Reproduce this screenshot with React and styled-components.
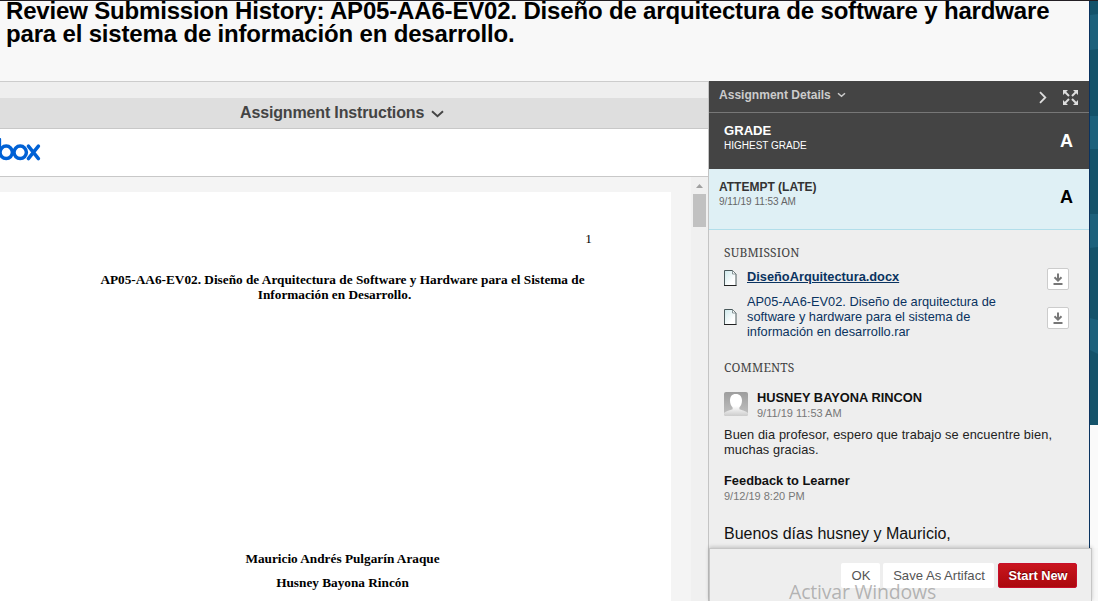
import React from "react";
import styled, { createGlobalStyle, css } from "styled-components";

const Global = createGlobalStyle`
  * { box-sizing: border-box; }
  body { margin: 0; background: #f8f8f8; font-family: "Liberation Sans", Arial, sans-serif; overflow: hidden; }
`;

const Screen = styled.div`
  position: relative;
  display: flex;
  width: 1098px;
  height: 601px;
  overflow: hidden;
  border-top: 1px solid #231f24;
`;
const Page = styled.div`
  width: 1089px;
  display: flex;
  flex-direction: column;
  background: #f8f8f8;
`;
const Backdrop = styled.div`
  width: 9px;
  border-left: 1px solid #0a3360;
  height: 547px;
  background: #fafafa;
  svg { display: block; }
`;
const Title = styled.h1`
  margin: 0;
  height: 80px;
  padding-left: 6px;
  font-size: 24px;
  line-height: 23px;
  letter-spacing: -0.17px;
  color: #000;
  white-space: nowrap;
  span { display: block; position: relative; top: -2px; }
`;
const Columns = styled.div`
  display: flex;
  flex: 1;
  min-height: 0;
`;
const Viewer = styled.main`
  width: 709px;
  border-right: 1px solid #c4c4c4;
  display: flex;
  flex-direction: column;
`;
const Spacer = styled.div`
  height: 17px;
  border-top: 1px solid #ccc;
  background: #eee;
`;
const Instructions = styled.div`
  height: 31px;
  display: flex;
  align-items: center;
  padding: 0 0 1px 240px;
  gap: 7px;
  background: #dedede;
  border-bottom: 1px solid #c8c8c8;
  color: #444;
  font-size: 16px;
  font-weight: bold;
  letter-spacing: -0.15px;
  svg { margin-top: 2px; }
`;
const BoxBar = styled.div`
  height: 48px;
  background: #fff;
  border-bottom: 1px solid #c8c8c8;
  svg { display: block; margin-top: 9px; }
`;
const Document = styled.div`
  flex: 1;
  min-height: 0;
  display: flex;
  background: #f4f4f4;
`;
const Paper = styled.article`
  width: 671px;
  margin: 15px 20px 0 0;
  padding: 39px 0 0 14px;
  background: #fff;
  color: #000;
  font-family: "Liberation Serif", "Times New Roman", serif;
  font-size: 13.27px;
  line-height: 15px;
  text-align: center;
`;
const PageNumber = styled.div`
  padding-right: 79px;
  text-align: right;
`;
const PaperTitle = styled.div`
  margin-top: 26px;
  font-weight: bold;
`;
const PaperTitleEnd = styled.div`
  padding-right: 16px;
`;
const Authors = styled.div`
  margin-top: 245px;
  line-height: 24px;
  font-weight: bold;
`;
const Scrollbar = styled.div`
  width: 17px;
  background: #f0f0f0;
  padding: 7px 0 0 2px;
  svg { display: block; margin-left: 3px; }
`;
const Thumb = styled.div`
  width: 13px;
  height: 33px;
  margin-top: 6px;
  background: #c1c1c1;
`;
const Details = styled.aside`
  width: 380px;
  background: #eee;
`;
const DetailsBar = styled.header`
  height: 32px;
  display: flex;
  align-items: center;
  padding-left: 10px;
  background: #444;
  border-bottom: 1px solid #777;
  color: #ccc;
`;
const DetailsTitle = styled.div`
  display: flex;
  align-items: center;
  gap: 6px;
  flex: 1;
  height: 15px;
  margin-bottom: 4px;
  font-size: 12.05px;
  font-weight: bold;
`;
const BarIcons = styled.div`
  display: flex;
  align-items: center;
  gap: 16px;
  margin: 2px 10px 0 0;
`;
const Band = styled.section`
  display: flex;
  justify-content: space-between;
  ${(p) => p.$attempt
    ? css`height: 61px; padding: 10px 16px 0 10px; background: #dff0f5; border-bottom: 1px solid #b2deea; color: #333;`
    : css`height: 56px; padding: 9px 16px 0 15px; background: #444; color: #fff;`}
`;
const BandTitle = styled.div`
  font-size: ${(p) => p.$size}px;
  line-height: ${(p) => p.$line}px;
  font-weight: bold;
`;
const BandNote = styled.div`
  font-size: 10px;
  line-height: 14px;
  color: ${(p) => p.$color};
`;
const Mark = styled.div`
  width: 13px;
  font-size: 18px;
  line-height: 20px;
  font-weight: bold;
  color: ${(p) => p.$color};
  padding-top: ${(p) => p.$drop}px;
`;
const Content = styled.div`
  padding: 15px 20px 0 15px;
`;
const Heading = styled.h2`
  margin: ${(p) => p.$gap || 0}px 0 0;
  height: 16px;
  font: 12px/16px "Noto Serif", "Liberation Serif", Georgia, serif;
  letter-spacing: 0.15px;
  color: #444;
`;
const FileRow = styled.div`
  display: flex;
  align-items: center;
  height: ${(p) => p.$height}px;
  > svg { margin-right: 10px; flex: none; }
`;
const FileName = styled.a`
  flex: 1;
  padding-bottom: 2px;
  font-size: 12.8px;
  line-height: 15px;
  white-space: pre-line;
  color: #0a3360;
  font-weight: ${(p) => (p.$current ? "bold" : "normal")};
  text-decoration: ${(p) => (p.$current ? "underline" : "none")};
`;
const Download = styled.button`
  width: 22px;
  height: 22px;
  margin: 2px 0 0;
  padding: 0;
  display: grid;
  place-items: center;
  background: #fff;
  border: 1px solid #ccc;
  border-radius: 2px;
`;
const Author = styled.div`
  display: flex;
  gap: 9px;
  margin-top: 13px;
  height: 32px;
  svg { margin-top: 3px; }
`;
const Name = styled.div`
  font-size: 12.85px;
  line-height: 17px;
  font-weight: bold;
  color: #111;
`;
const Stamp = styled.div`
  font-size: 11px;
  line-height: 15px;
  color: #777;
`;
const Comment = styled.p`
  margin: 6px 0 15px;
  font-size: 12.8px;
  letter-spacing: 0.09px;
  line-height: 15px;
  color: #222;
  white-space: pre-line;
`;
const Reply = styled.p`
  margin: 20px 0 0;
  font-size: 16px;
  line-height: 20px;
  color: #111;
`;
const Footer = styled.footer`
  position: absolute;
  left: 709px;
  bottom: 0;
  width: 383px;
  height: 53px;
  display: flex;
  justify-content: flex-end;
  gap: 3px;
  padding: 14px 14px 0 0;
  background: #eee;
  border: 1px solid #c6c6c6;
  border-bottom: 0;
  box-shadow: 0 -1px 4px rgba(0, 0, 0, 0.2);
`;
const Button = styled.button`
  width: ${(p) => p.$width}px;
  height: 25px;
  padding: 0;
  border: 0;
  border-radius: 2px;
  font: 14px "Liberation Sans", Arial, sans-serif;
  white-space: nowrap;
  ${(p) => p.$primary
    ? css`background: linear-gradient(#c9151e, #ab080d); border: 1px solid #c70e2b; color: #fff; font-weight: bold; font-size: 12.8px; padding-left: 1px; margin-left: 1px; text-shadow: 0 -1px 1px #600;`
    : css`background: #fff; color: #555; font-size: 13.1px; padding-left: 1px;`}
`;
const Watermark = styled.div`
  position: absolute;
  left: 789px;
  top: 579px;
  font: 19.5px/24px "Open Sans", "Noto Sans", sans-serif;
  letter-spacing: -0.2px;
  color: rgba(145, 145, 145, 0.65);
  white-space: nowrap;
`;

const Chevron = ({ w, h, stroke = 1.9 }) => (
  <svg width={w} height={h} viewBox={`0 0 ${w} ${h}`} fill="none" stroke="currentColor" strokeWidth={stroke}>
    <path d={`M1 1.2 L${w / 2} ${h - 1.7} L${w - 1} 1.2`} />
  </svg>
);
const BoxLogo = () => (
  <svg width="41" height="24" viewBox="0 0 41 24" fill="none" stroke="#0061d5" strokeWidth="3.5" strokeLinecap="round">
    <path d="M-.6 1.500v13" />
    <circle cx="6.200" cy="14.300" r="6.200" />
    <circle cx="20.200" cy="14.300" r="6.200" />
    <path d="M28.400 8.200l10 12.400M38.400 8.200l-10 12.400" />
  </svg>
);
const NextIcon = () => (
  <svg width="8" height="13" viewBox="0 0 8 13" fill="none" stroke="#ddd" strokeWidth="1.8">
    <path d="M1 1.200l5.300 5.300L1 11.800" />
  </svg>
);
const ExpandIcon = () => (
  <svg width="16" height="16" viewBox="0 0 16 16" fill="#ddd" stroke="#ddd" strokeWidth="2">
    <path d="M2 2l4 4M13 2l-4 4M2 13l4-4M13 13l-4-4" />
    <path stroke="none" d="M0 0h5L0 5zM15 0v5l-5-5zM0 15v-5l5 5zM15 15h-5l5-5z" />
  </svg>
);
const FileIcon = () => (
  <svg width="13" height="16" viewBox="0 0 13 16">
    <defs>
      <linearGradient id="sheet" x2="1" y2="1">
        <stop stopColor="#cde8eb" /><stop offset=".7" stopColor="#fff" />
      </linearGradient>
    </defs>
    <path d="M.5.5h8l3.500 3.500v11.500H.5z" fill="url(#sheet)" stroke="#49585a" />
    <path d="M8.500.8v3.200h3.200" fill="#fff" stroke="#718083" strokeWidth=".8" />
    <path d="M0 15.500h12.500" stroke="#222" />
  </svg>
);
const DownloadIcon = () => (
  <svg width="10" height="12" viewBox="0 0 10 12" fill="none" stroke="#777" strokeWidth="2">
    <path d="M5 .5v7M1.500 4.200L5 7.600l3.500-3.400" /><path d="M.5 11h9" />
  </svg>
);
const Avatar = () => (
  <svg width="24" height="24" viewBox="0 0 24 24">
    <defs>
      <linearGradient id="avatarBack" x2="0" y2="1"><stop stopColor="#9d9d9d" /><stop offset="1" stopColor="#c2c2c2" /></linearGradient>
      <linearGradient id="avatarBody" x2="0" y2="1"><stop offset=".55" stopColor="#fff" /><stop offset="1" stopColor="#ccc" /></linearGradient>
    </defs>
    <rect width="24" height="24" rx="2" fill="url(#avatarBack)" />
    <path d="M11.800 2C7.800 2 6 4.700 6 8.500c0 3 1 5.300 2.600 6.900v1.800C6 18.500 2 18.800 0 21v1q0 2 2 2h20q2 0 2-2v-1c-2-2.200-6-2.500-8.600-3.800v-1.800C17 13.800 18 11.500 18 8.500 18 4.700 15.800 2 11.800 2z" fill="url(#avatarBody)" />
  </svg>
);
const TealPattern = () => (
  <svg width="8" height="424" viewBox="0 0 8 424">
    <rect width="8" height="424" fill="#14536a" />
    <g fill="#1c617b">
      <path d="M0 14l8-1v35l-8 1zM0 115h8v33H0zM0 213h8v33l-8 1zM0 317l8 2v34l-8-4z" />
    </g>
  </svg>
);

export default function App() {
  return (
    <Screen>
      <Global />
      <Page>
        <Title>
          <span>Review Submission History: AP05-AA6-EV02. Diseño de arquitectura de software y hardware</span>
          <span>para el sistema de información en desarrollo.</span>
        </Title>
        <Columns>
          <Viewer>
            <Spacer />
            <Instructions>Assignment Instructions <Chevron w={13} h={8} /></Instructions>
            <BoxBar><BoxLogo /></BoxBar>
            <Document>
              <Paper>
                <PageNumber>1</PageNumber>
                <PaperTitle>
                  AP05-AA6-EV02. Diseño de Arquitectura de Software y Hardware para el Sistema de
                  <PaperTitleEnd>Información en Desarrollo.</PaperTitleEnd>
                </PaperTitle>
                <Authors>Mauricio Andrés Pulgarín Araque<br />Husney Bayona Rincón</Authors>
              </Paper>
              <Scrollbar>
                <svg width="7" height="4"><path d="M0 4L3.500 0 7 4z" fill="#a0a0a0" /></svg>
                <Thumb />
              </Scrollbar>
            </Document>
          </Viewer>
          <Details>
            <DetailsBar>
              <DetailsTitle>Assignment Details <Chevron w={9} h={6} stroke={1.5} /></DetailsTitle>
              <BarIcons><NextIcon /><ExpandIcon /></BarIcons>
            </DetailsBar>
            <Band>
              <div>
                <BandTitle $size={13.1} $line={17}>GRADE</BandTitle>
                <BandNote $color="#fff">HIGHEST GRADE</BandNote>
              </div>
              <Mark $color="#fff" $drop={9}>A</Mark>
            </Band>
            <Band $attempt>
              <div>
                <BandTitle $size={12} $line={16}>ATTEMPT (LATE)</BandTitle>
                <BandNote $color="#666">9/11/19 11:53 AM</BandNote>
              </div>
              <Mark $color="#000" $drop={8}>A</Mark>
            </Band>
            <Content>
              <Heading>SUBMISSION</Heading>
              <FileRow $height={33}>
                <FileIcon /><FileName $current>DiseñoArquitectura.docx</FileName><Download><DownloadIcon /></Download>
              </FileRow>
              <FileRow $height={46}>
                <FileIcon />
                <FileName>{"AP05-AA6-EV02. Diseño de arquitectura de\nsoftware y hardware para el sistema de\ninformación en desarrollo.rar"}</FileName>
                <Download><DownloadIcon /></Download>
              </FileRow>
              <Heading $gap={20}>COMMENTS</Heading>
              <Author>
                <Avatar />
                <div><Name>HUSNEY BAYONA RINCON</Name><Stamp>9/11/19 11:53 AM</Stamp></div>
              </Author>
              <Comment>{"Buen dia profesor, espero que trabajo se encuentre bien,\nmuchas gracias."}</Comment>
              <Name>Feedback to Learner</Name>
              <Stamp>9/12/19 8:20 PM</Stamp>
              <Reply>Buenos días husney y Mauricio,</Reply>
            </Content>
          </Details>
        </Columns>
      </Page>
      <Backdrop><TealPattern /></Backdrop>
      <Footer>
        <Button $width={39}>OK</Button>
        <Button $width={111}>Save As Artifact</Button>
        <Button $width={79} $primary>Start New</Button>
      </Footer>
      <Watermark>Activar Windows</Watermark>
    </Screen>
  );
}
